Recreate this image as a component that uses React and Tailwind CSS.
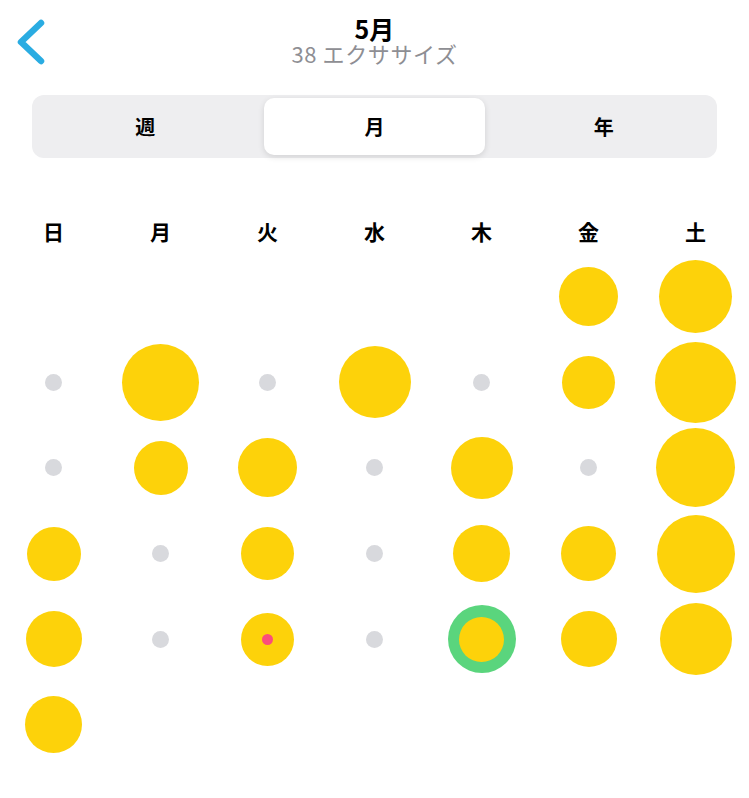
import React from "react";

const rows = [
  [null, null, null, null, null, 59, 73],
  ["d", 77, "d", 72, "d", 53, 81],
  ["d", 54, 59, "d", 62, "d", 79],
  [54, "d", 53, "d", 57, 55, 78],
  [56, "d", "pink", "d", "ring", 56, 72],
  [57, null, null, null, null, null, null],
];

function Cell({ v }) {
  let inner = null;
  if (v === "d") {
    inner = <div className="w-[17px] h-[17px] rounded-full bg-[#d8d9dd]" />;
  } else if (v === "pink") {
    inner = (
      <div className="w-[53px] h-[53px] rounded-full bg-[#fdd20a] flex items-center justify-center">
        <div className="w-[11px] h-[11px] rounded-full bg-[#fb4d7c]" />
      </div>
    );
  } else if (v === "ring") {
    inner = (
      <div className="w-[68px] h-[68px] rounded-full bg-[#5ad57d] flex items-center justify-center">
        <div className="w-[45px] h-[45px] rounded-full bg-[#fdd20a]" />
      </div>
    );
  } else if (typeof v === "number") {
    inner = (
      <div
        className="rounded-full bg-[#fdd20a]"
        style={{ width: v, height: v }}
      />
    );
  }
  return <div className="flex items-center justify-center">{inner}</div>;
}

export default function App() {
  const days = ["日", "月", "火", "水", "木", "金", "土"];
  return (
    <div
      className="w-[749px] h-[798px] bg-white overflow-hidden text-black"
      style={{ fontFamily: '"Noto Sans CJK JP", "Noto Sans", sans-serif' }}
    >
      {/* header */}
      <div className="grid grid-cols-[60px_1fr_60px] items-start h-[78px] pt-[16px]">
        <div className="pl-[15px] pt-[2px]">
          <svg className="block" width="32" height="48" viewBox="0 0 32 48" fill="none">
            <path
              d="M26 5 L6 24 L26 43"
              stroke="#2aace2"
              strokeWidth="6.5"
              strokeLinecap="round"
              strokeLinejoin="round"
            />
          </svg>
        </div>
        <div className="flex flex-col items-center">
          <div className="text-[25px] leading-[25px] font-bold">5月</div>
          <div className="text-[22px] leading-[25px] tracking-[0.6px] text-[#8e8e93]">
            38 エクササイズ
          </div>
        </div>
        <div />
      </div>

      {/* segmented control */}
      <div className="mx-[32px] mt-[17px] h-[63px] rounded-[12px] bg-[#eeeef0] p-[3px] grid grid-cols-3 gap-[9px]">
        <div className="flex items-center justify-center text-[20px] font-bold">週</div>
        <div className="flex items-center justify-center text-[20px] font-bold bg-white rounded-[10px] shadow-[0_2px_6px_rgba(0,0,0,0.12)]">
          月
        </div>
        <div className="flex items-center justify-center text-[20px] font-bold">年</div>
      </div>

      {/* day headers */}
      <div className="grid grid-cols-7 mt-[52px] h-[44px]">
        {days.map((d) => (
          <div key={d} className="flex items-center justify-center text-[21px] font-bold">
            {d}
          </div>
        ))}
      </div>

      {/* calendar grid */}
      <div className="grid grid-cols-7 auto-rows-[85.6px]">
        {rows.flatMap((r, ri) =>
          r.map((v, ci) => <Cell key={ri + "-" + ci} v={v} />)
        )}
      </div>
    </div>
  );
}
